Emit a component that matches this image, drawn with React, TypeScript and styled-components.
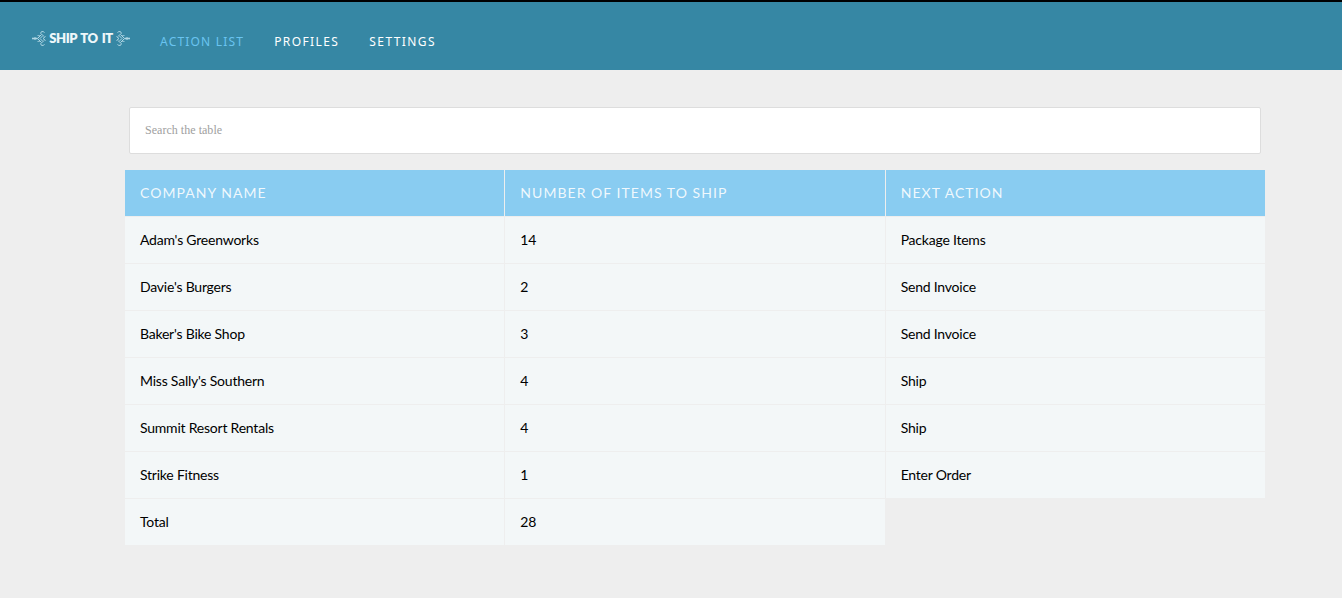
import React from "react";
import styled, { createGlobalStyle } from "styled-components";

const GlobalStyle = createGlobalStyle`
  * { box-sizing: border-box; }
  body { margin: 0; background: #eeeeee; font-family: Lato, sans-serif; color: #000; }
`;

const Header = styled.header`
  display: flex;
  height: 70px;
  padding: 28px 0 0 31px;
  background: #3687a4;
  border-top: 2px solid #000;
`;

const Logo = styled.a`
  display: flex;
  align-items: center;
  justify-content: space-between;
  width: 100px;
  height: 17px;
  color: #eef7fa;
`;

const LogoText = styled.span`
  font: 800 13px/17px Lato, sans-serif;
  letter-spacing: -0.45px;
  word-spacing: 1.4px;
  white-space: nowrap;
`;

const Flourish = styled.svg<{ $flip?: boolean }>`
  width: 16px;
  height: 17px;
  flex: none;
  color: #b0d6e3;
  transform: ${(p) => (p.$flip ? "scaleX(-1)" : "none")};
`;

const Nav = styled.nav`
  display: flex;
  gap: 30px;
  margin-left: 29px;
`;

const NavLink = styled.a<{ $active?: boolean }>`
  font: 400 12px/23px "Noto Sans", sans-serif;
  letter-spacing: ${(p) => (p.$active ? "1.2px" : "1.4px")};
  text-transform: uppercase;
  color: ${(p) => (p.$active ? "#6ac4f0" : "#fff")};
`;

const Main = styled.main`
  width: 1140px;
  margin: 37px 0 0 125px;
`;

const Search = styled.input`
  display: block;
  width: 1132px;
  height: 47px;
  margin: 0 4px 16px;
  padding: 0 15px;
  border: 1px solid #dddddd;
  border-radius: 2px;
  background: #fff;
  font: 12px "Liberation Serif", serif;
  letter-spacing: 0.03px;
  outline: none;
  &::placeholder { color: #a0a0a0; opacity: 1; }
`;

const Table = styled.div`
  display: grid;
  grid-template-columns: repeat(3, 1fr);
  grid-auto-rows: 46px;
  gap: 1px;
`;

const HeadCell = styled.div`
  padding-left: 15px;
  background: #89ccf1;
  color: rgba(255, 255, 255, 0.88);
  font-size: 14px;
  line-height: 46px;
  letter-spacing: 1.04px;
  text-transform: uppercase;
`;

const Cell = styled.div`
  padding-left: 15px;
  background: #f3f7f8;
  font-size: 14px;
  line-height: 46px;
  letter-spacing: -0.22px;
`;

const rows = [
  ["Adam's Greenworks", "14", "Package Items"],
  ["Davie's Burgers", "2", "Send Invoice"],
  ["Baker's Bike Shop", "3", "Send Invoice"],
  ["Miss Sally's Southern", "4", "Ship"],
  ["Summit Resort Rentals", "4", "Ship"],
  ["Strike Fitness", "1", "Enter Order"],
  ["Total", "28"],
];

const Ornament = ({ flip }: { flip?: boolean }) => (
  <Flourish $flip={flip} viewBox="0 0 16 17" fill="none" stroke="currentColor" strokeWidth="1">
    <path d="M1 8.500H6.500" strokeWidth="1.6" />
    <path d="M3.500 7l1.500 1.500L3.500 10" />
    <path d="M6.500 8.500L10 5M6.500 8.500L10 12M9 8.500l2.500-2.500M9 8.500l2.500 2.500M12 8.500l2.500-2M12 8.500l2.500 2" />
    <path d="M13.500 2.500C12 .8 9.500 1.500 9.700 3.300C10 5 12.500 4.800 13 6.500M13.500 14.500C12 16.200 9.500 15.500 9.700 13.700C10 12 12.500 12.200 13 10.500" />
    <path d="M6.500 5.500l2.500 .3M6.500 11.500l2.500-.3" strokeWidth=".8" />
  </Flourish>
);

export default function App() {
  return (
    <>
      <GlobalStyle />
      <Header>
        <Logo>
          <Ornament />
          <LogoText>SHIP TO IT</LogoText>
          <Ornament flip />
        </Logo>
        <Nav>
          <NavLink $active>Action List</NavLink>
          <NavLink>Profiles</NavLink>
          <NavLink>Settings</NavLink>
        </Nav>
      </Header>
      <Main>
        <Search placeholder="Search the table" />
        <Table>
          {["Company Name", "Number of Items to Ship", "Next Action"].map((h) => (
            <HeadCell key={h}>{h}</HeadCell>
          ))}
          {rows.flatMap((row, r) => row.map((v, c) => <Cell key={`${r}-${c}`}>{v}</Cell>))}
        </Table>
      </Main>
    </>
  );
}
